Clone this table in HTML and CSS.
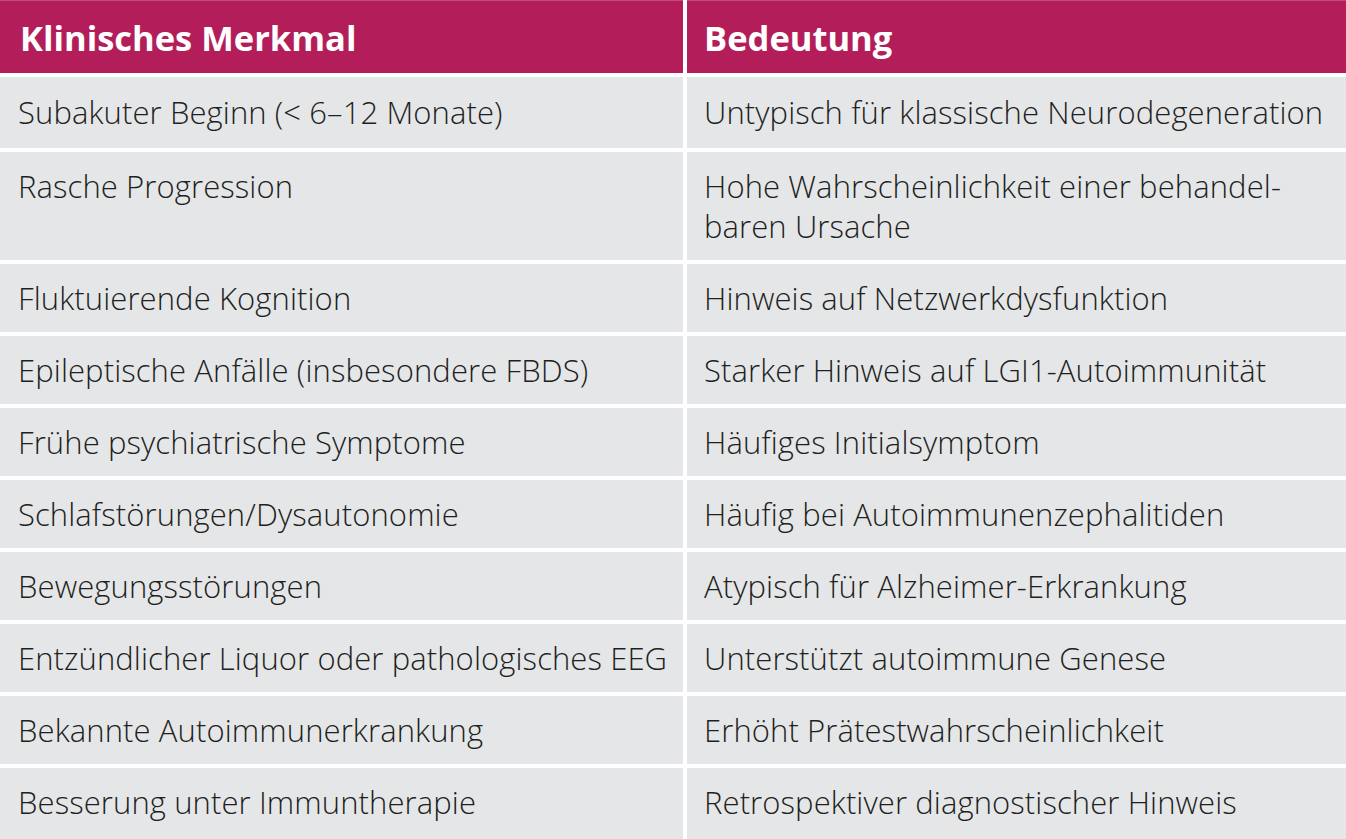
FILE: index.html
```html
<!DOCTYPE html>
<html lang="de">
<head>
<meta charset="utf-8">
<title>Klinische Merkmale</title>
<link rel="stylesheet" href="styles.css">
</head>
<body>
<div class="table">
  <div class="cell head">Klinisches Merkmal</div>
  <div class="cell head right">Bedeutung</div>

  <div class="cell r1">Subakuter Beginn (&lt; 6–12 Monate)</div>
  <div class="cell r1 right">Untypisch für klassische Neurodegeneration</div>

  <div class="cell">Rasche Progression</div>
  <div class="cell right">Hohe Wahrscheinlichkeit einer behandel-<br>baren Ursache</div>

  <div class="cell">Fluktuierende Kognition</div>
  <div class="cell right">Hinweis auf Netzwerkdysfunktion</div>

  <div class="cell">Epileptische Anfälle (insbesondere FBDS)</div>
  <div class="cell right">Starker Hinweis auf LGI1-Autoimmunität</div>

  <div class="cell">Frühe psychiatrische Symptome</div>
  <div class="cell right">Häufiges Initialsymptom</div>

  <div class="cell">Schlafstörungen/Dysautonomie</div>
  <div class="cell right">Häufig bei Autoimmunenzephalitiden</div>

  <div class="cell">Bewegungsstörungen</div>
  <div class="cell right">Atypisch für Alzheimer-Erkrankung</div>

  <div class="cell">Entzündlicher Liquor oder pathologisches EEG</div>
  <div class="cell right">Unterstützt autoimmune Genese</div>

  <div class="cell">Bekannte Autoimmunerkrankung</div>
  <div class="cell right">Erhöht Prätestwahrscheinlichkeit</div>

  <div class="cell">Besserung unter Immuntherapie</div>
  <div class="cell right">Retrospektiver diagnostischer Hinweis</div>
</div>
</body>
</html>
```

FILE: styles.css
```css
html, body {
  margin: 0;
  padding: 0;
  background: #ffffff;
}

.table {
  display: grid;
  grid-template-columns: 683px 1fr;
  column-gap: 4px;
  row-gap: 4px;
  width: 1346px;
  height: 839px;
  grid-template-rows: 73px 71px 108px repeat(7, 68px) 1fr;
  overflow: hidden;
  font-family: "Open Sans", "Liberation Sans", sans-serif;
  color: #1f1f21;
}

.cell {
  background: #e5e6e8;
  font-size: 31px;
  font-weight: 300;
  line-height: 40px;
  letter-spacing: 0.1px;
  padding: 14px 18px 0 18px;
  white-space: nowrap;
}

.cell.right {
  padding-left: 17px;
}

.cell.r1 {
  padding-top: 15px;
}

.head {
  background: #b31e5a;
  color: #ffffff;
  font-weight: 700;
  font-size: 34.5px;
  letter-spacing: 0;
  padding: 17px 20px 0 20px;
  border-top: 1px solid #c24a78;
}

.head.right {
  padding-left: 17px;
}
```
